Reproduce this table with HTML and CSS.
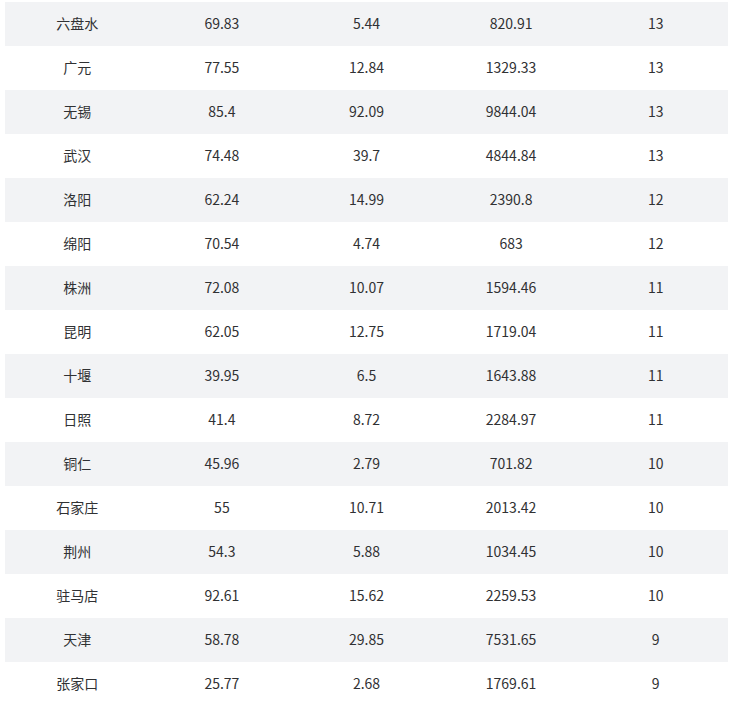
FILE: index.html
```html
<!DOCTYPE html>
<html lang="zh">
<head>
<meta charset="utf-8">
<link rel="stylesheet" href="styles.css">
</head>
<body>
<table class="data">
<tbody>
<tr><td>六盘水</td><td>69.83</td><td>5.44</td><td>820.91</td><td>13</td></tr>
<tr><td>广元</td><td>77.55</td><td>12.84</td><td>1329.33</td><td>13</td></tr>
<tr><td>无锡</td><td>85.4</td><td>92.09</td><td>9844.04</td><td>13</td></tr>
<tr><td>武汉</td><td>74.48</td><td>39.7</td><td>4844.84</td><td>13</td></tr>
<tr><td>洛阳</td><td>62.24</td><td>14.99</td><td>2390.8</td><td>12</td></tr>
<tr><td>绵阳</td><td>70.54</td><td>4.74</td><td>683</td><td>12</td></tr>
<tr><td>株洲</td><td>72.08</td><td>10.07</td><td>1594.46</td><td>11</td></tr>
<tr><td>昆明</td><td>62.05</td><td>12.75</td><td>1719.04</td><td>11</td></tr>
<tr><td>十堰</td><td>39.95</td><td>6.5</td><td>1643.88</td><td>11</td></tr>
<tr><td>日照</td><td>41.4</td><td>8.72</td><td>2284.97</td><td>11</td></tr>
<tr><td>铜仁</td><td>45.96</td><td>2.79</td><td>701.82</td><td>10</td></tr>
<tr><td>石家庄</td><td>55</td><td>10.71</td><td>2013.42</td><td>10</td></tr>
<tr><td>荆州</td><td>54.3</td><td>5.88</td><td>1034.45</td><td>10</td></tr>
<tr><td>驻马店</td><td>92.61</td><td>15.62</td><td>2259.53</td><td>10</td></tr>
<tr><td>天津</td><td>58.78</td><td>29.85</td><td>7531.65</td><td>9</td></tr>
<tr><td>张家口</td><td>25.77</td><td>2.68</td><td>1769.61</td><td>9</td></tr>
</tbody>
</table>
</body>
</html>
```
FILE: styles.css
```css
html, body {
  margin: 0;
  padding: 0;
  background: #ffffff;
}
body {
  padding: 2px 4px 0 5px;
  font-family: "Noto Sans CJK SC", "Noto Sans", sans-serif;
  font-size: 14px;
  color: #303133;
}
.data {
  width: 723px;
  border-collapse: collapse;
  table-layout: fixed;
}
.data tr {
  height: 44px;
}
.data td {
  padding: 0 0 2px 0;
  text-align: center;
  vertical-align: middle;
  line-height: 20px;
}
.data tr:nth-child(odd) {
  background: #f2f3f5;
}
```
